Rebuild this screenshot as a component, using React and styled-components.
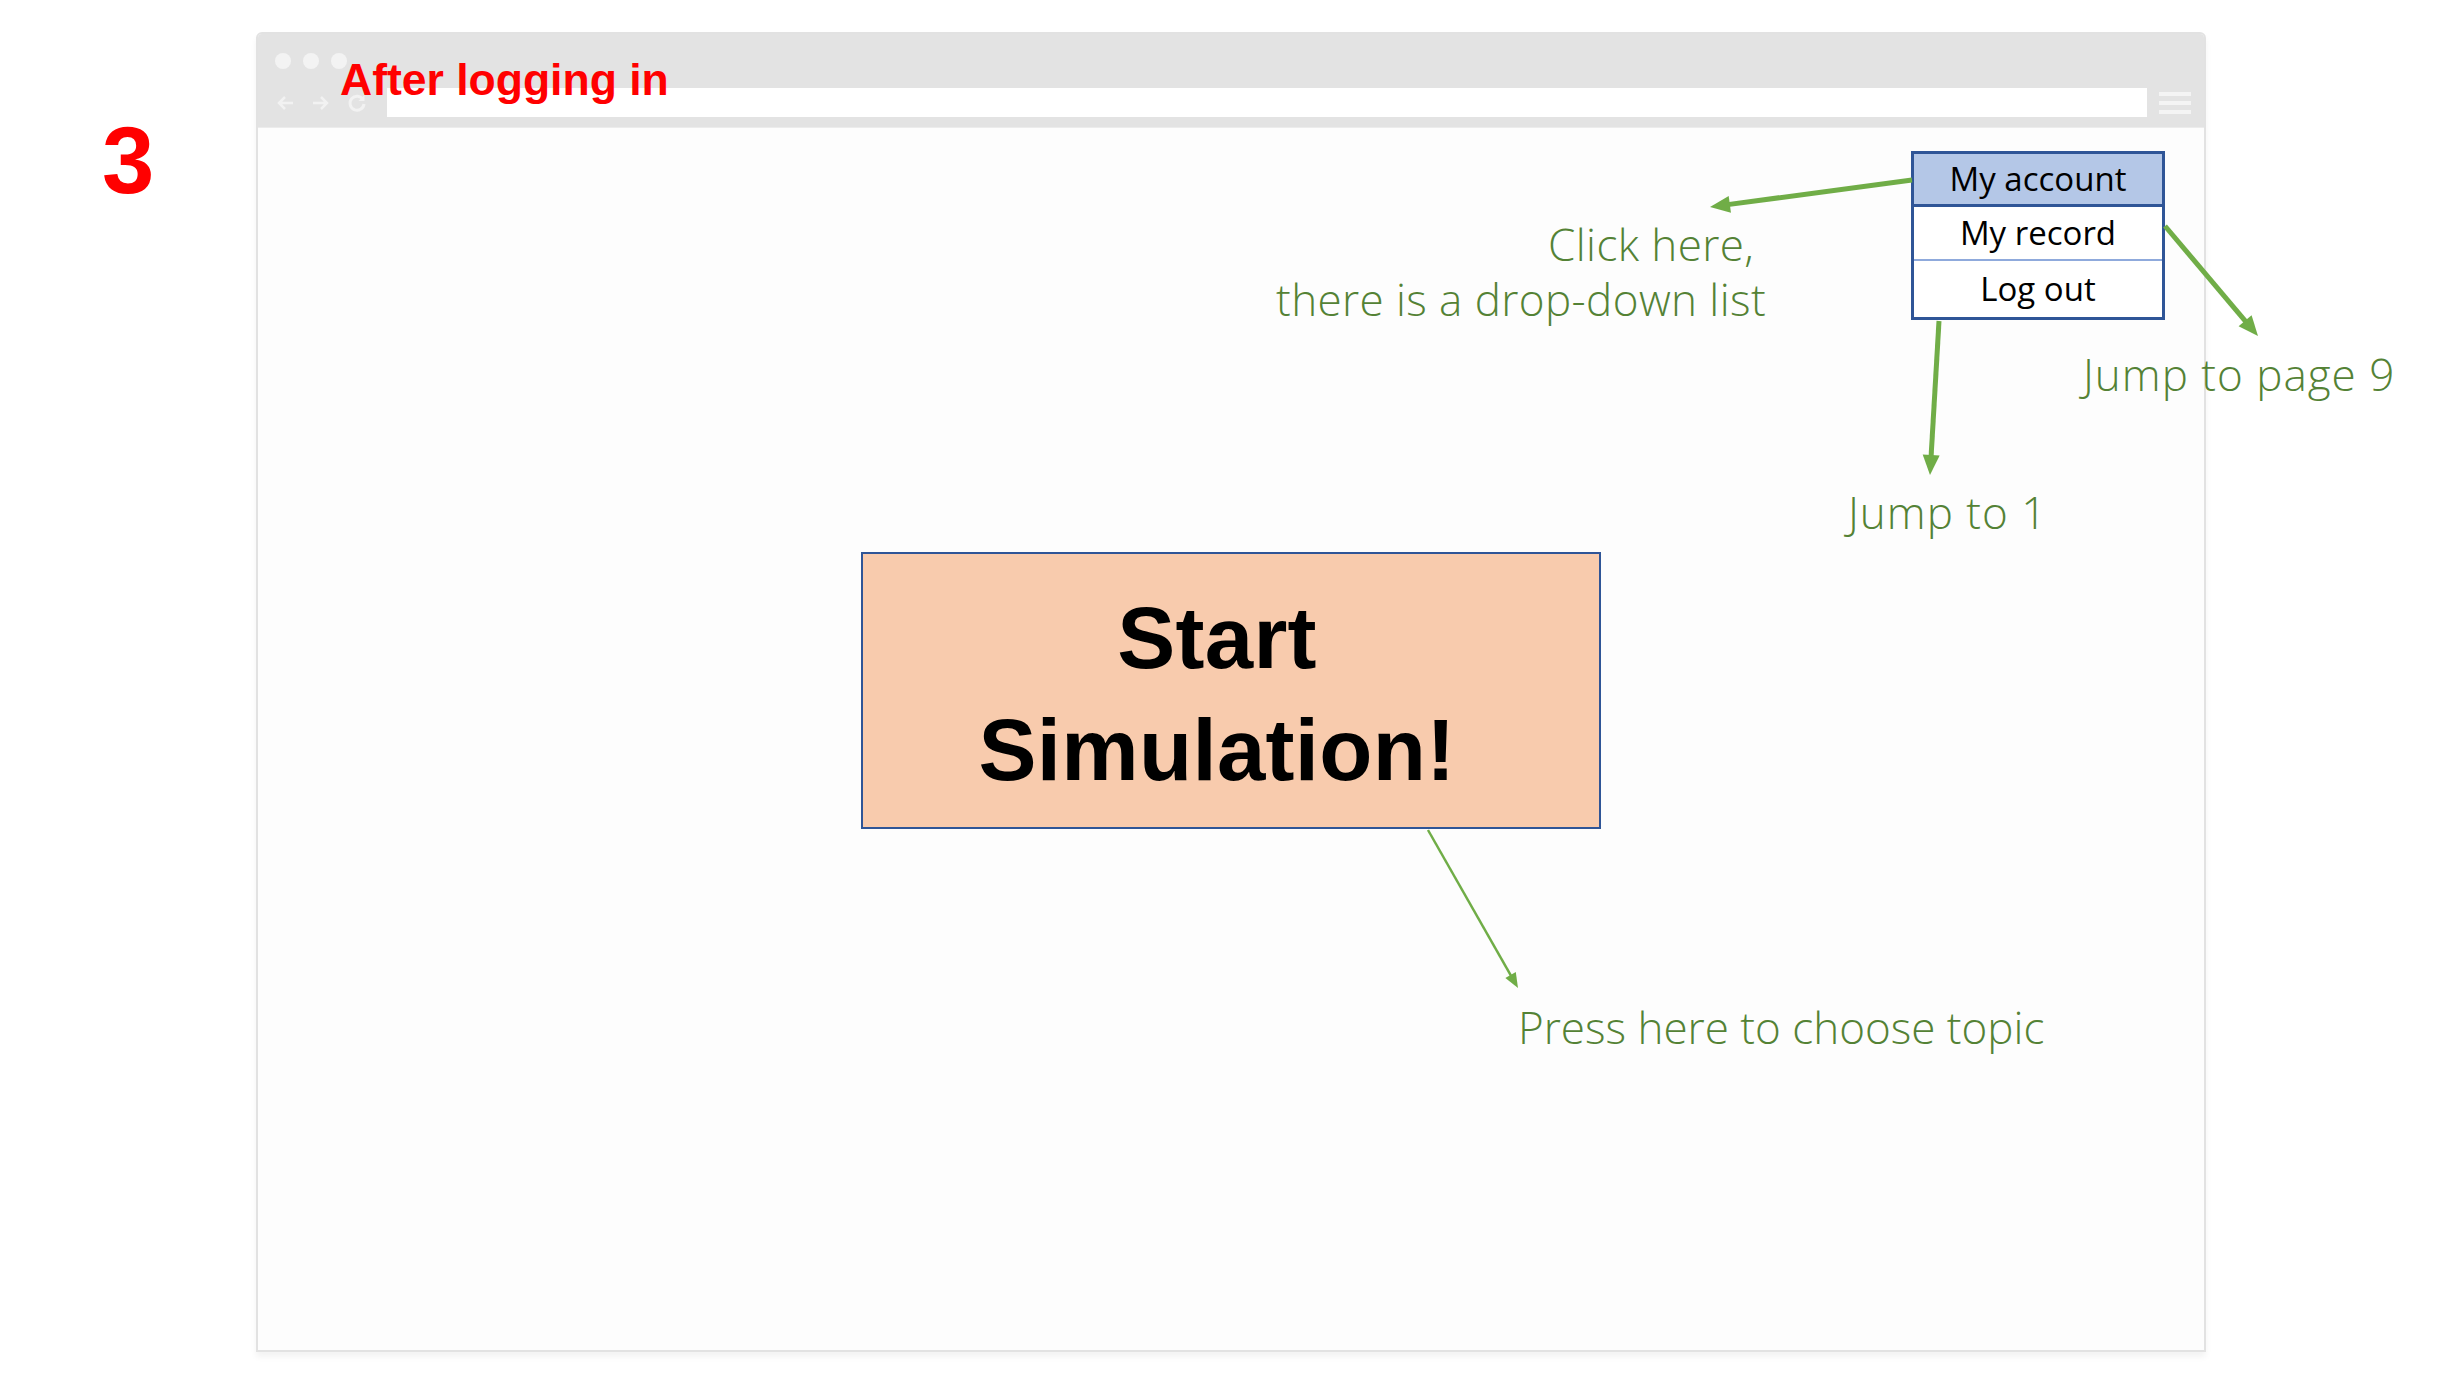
import React from 'react';
import styled, { createGlobalStyle } from 'styled-components';

const Global = createGlobalStyle`
  html, body { margin: 0; padding: 0; background: #ffffff; }
  body {
    width: 2457px;
    height: 1380px;
    overflow: hidden;
    font-family: "Open Sans", "Noto Sans", sans-serif;
  }
`;

const Page = styled.div`
  position: relative;
  width: 2457px;
  height: 1380px;
  box-sizing: border-box;
  padding-top: 32px;
  display: grid;
  grid-template-columns: 256px 1950px;
  align-items: start;
`;

const SlideNumber = styled.div`
  font-family: "Liberation Sans", Arial, sans-serif;
  font-weight: 700;
  font-size: 94px;
  line-height: 1;
  color: #ff0000;
  padding: 82px 0 0 102px;
`;

const Frame = styled.div`
  width: 1950px;
  height: 1320px;
  box-sizing: border-box;
  border: 2px solid #e2e2e2;
  border-radius: 6px 6px 0 0;
  box-shadow: 0 5px 6px rgba(0, 0, 0, 0.05);
  background: #fdfdfd;
  display: flex;
  flex-direction: column;
`;

const Chrome = styled.div`
  height: 93px;
  box-sizing: border-box;
  background: #e3e3e3;
  border-radius: 4px 4px 0 0;
  padding: 19px 13px 10px 17px;
  display: flex;
  flex-direction: column;
  gap: 19px;
`;

const DotRow = styled.div`
  display: flex;
  gap: 12px;
  height: 16px;
`;

const Dot = styled.span`
  width: 16px;
  height: 16px;
  border-radius: 50%;
  background: #f3f3f3;
`;

const NavRow = styled.div`
  height: 29px;
  display: flex;
  align-items: center;
  gap: 16px;
`;

const NavIcon = styled.svg`
  width: 20px;
  height: 20px;
  flex: none;
`;

const AddressBar = styled.div`
  flex: 1;
  height: 29px;
  margin-left: 4px;
  background: #ffffff;
`;

const Burger = styled.div`
  width: 32px;
  height: 22px;
  display: flex;
  flex-direction: column;
  justify-content: space-between;
  margin-left: -4px;
`;

const BurgerLine = styled.span`
  height: 4px;
  background: #f4f4f4;
`;

const Viewport = styled.div`
  flex: 1;
  border-top: 1px solid #ececec;
  background: #fdfdfd;
  display: flex;
  flex-direction: column;
`;

const TopBar = styled.div`
  display: flex;
  justify-content: flex-end;
  padding: 23px 39px 0 0;
`;

const Menu = styled.div`
  width: 254px;
  box-sizing: border-box;
  border: 3px solid #2f5597;
  background: #ffffff;
  display: flex;
  flex-direction: column;
`;

const MenuHeader = styled.div`
  height: 53px;
  box-sizing: border-box;
  background: #b4c7e7;
  border-bottom: 3px solid #2f5597;
  font-size: 33px;
  line-height: 50px;
  text-align: center;
  color: #000;
`;

const MenuItem = styled.div`
  height: ${(p) => p.$h}px;
  box-sizing: border-box;
  border-bottom: ${(p) => (p.$divider ? '2px solid #8faadc' : 'none')};
  font-size: 33px;
  line-height: ${(p) => p.$h - (p.$divider ? 2 : 0)}px;
  text-align: center;
  color: #000;
`;

const Stage = styled.div`
  display: flex;
  justify-content: center;
  padding-top: 232px;
`;

const StartButton = styled.div`
  width: 740px;
  height: 277px;
  box-sizing: border-box;
  border: 2px solid #2f5597;
  background: #f8cbad;
  display: flex;
  align-items: center;
  justify-content: center;
  padding: 7px 28px 0 0;
  font-family: "Liberation Sans", Arial, sans-serif;
  font-weight: 700;
  font-size: 87px;
  line-height: 112px;
  text-align: center;
  color: #000;
  letter-spacing: 0.3px;
`;

const Overlay = styled.div`
  position: absolute;
  inset: 0;
  pointer-events: none;
`;

const ArrowLayer = styled.svg`
  position: absolute;
  left: 0;
  top: 0;
  width: 2457px;
  height: 1380px;
`;

const Caption = styled.div`
  position: absolute;
  left: 340px;
  top: 58px;
  font-family: "Liberation Sans", Arial, sans-serif;
  font-weight: 700;
  font-size: 44.5px;
  line-height: 1;
  color: #ff0000;
  white-space: nowrap;
`;

const Note = styled.div`
  position: absolute;
  left: ${(p) => p.$left}px;
  top: ${(p) => p.$top}px;
  width: ${(p) => (p.$width ? `${p.$width}px` : 'auto')};
  text-align: ${(p) => p.$align || 'left'};
  font-family: "Open Sans", "Noto Sans", sans-serif;
  font-weight: 300;
  font-size: 44px;
  line-height: 55px;
  letter-spacing: ${(p) => p.$track || 0}px;
  color: #548235;
  white-space: pre;
`;

function Arrow({ x1, y1, x2, y2, w, len, head }) {
  const dx = x2 - x1;
  const dy = y2 - y1;
  const d = Math.hypot(dx, dy);
  const ux = dx / d;
  const uy = dy / d;
  const nx = -uy;
  const ny = ux;
  const bx = x2 - ux * len;
  const by = y2 - uy * len;
  const lx = x2 - ux * (len * 0.7);
  const ly = y2 - uy * (len * 0.7);
  const pts = `${x2},${y2} ${bx + (nx * head) / 2},${by + (ny * head) / 2} ${bx - (nx * head) / 2},${by - (ny * head) / 2}`;
  return (
    <g>
      <line x1={x1} y1={y1} x2={lx} y2={ly} stroke="#70ad47" strokeWidth={w} />
      <polygon points={pts} fill="#70ad47" />
    </g>
  );
}

export default function App() {
  return (
    <>
      <Global />
      <Page>
        <SlideNumber>3</SlideNumber>
        <Frame>
          <Chrome>
            <DotRow>
              <Dot />
              <Dot />
              <Dot />
            </DotRow>
            <NavRow>
              <NavIcon viewBox="0 0 20 20">
                <path d="M18 10H5M10 4L4 10l6 6" fill="none" stroke="#f2f2f2" strokeWidth="2.5" />
              </NavIcon>
              <NavIcon viewBox="0 0 20 20">
                <path d="M2 10h13M10 4l6 6-6 6" fill="none" stroke="#f2f2f2" strokeWidth="2.5" />
              </NavIcon>
              <NavIcon viewBox="0 0 20 20">
                <path d="M16 6.5A7 7 0 1 0 17 11" fill="none" stroke="#f2f2f2" strokeWidth="3" />
                <path d="M17.5 2v6h-6z" fill="#f2f2f2" />
              </NavIcon>
              <AddressBar />
              <Burger>
                <BurgerLine />
                <BurgerLine />
                <BurgerLine />
              </Burger>
            </NavRow>
          </Chrome>
          <Viewport>
            <TopBar>
              <Menu>
                <MenuHeader>My account</MenuHeader>
                <MenuItem $h={54} $divider>My record</MenuItem>
                <MenuItem $h={56}>Log out</MenuItem>
              </Menu>
            </TopBar>
            <Stage>
              <StartButton>
                Start
                <br />
                Simulation!
              </StartButton>
            </Stage>
          </Viewport>
        </Frame>

        <Overlay>
          <ArrowLayer viewBox="0 0 2457 1380">
            <Arrow x1={1912} y1={180} x2={1710} y2={207} w={5} len={20} head={17} />
            <Arrow x1={1939} y1={321} x2={1930} y2={475} w={5} len={20} head={17} />
            <Arrow x1={2165} y1={226} x2={2258} y2={336} w={5} len={20} head={17} />
            <Arrow x1={1428} y1={830} x2={1518} y2={988} w={2.5} len={15} head={12} />
          </ArrowLayer>
          <Caption>After logging in</Caption>
          <Note $left={1100} $top={217} $width={666} $align="right" $track={0.4}>
            {'Click here, \nthere is a drop-down list'}
          </Note>
          <Note $left={2083} $top={347} $track={1}>Jump to page 9</Note>
          <Note $left={1848} $top={485} $track={1}>Jump to 1</Note>
          <Note $left={1518} $top={1000}>Press here to choose topic</Note>
        </Overlay>
      </Page>
    </>
  );
}
